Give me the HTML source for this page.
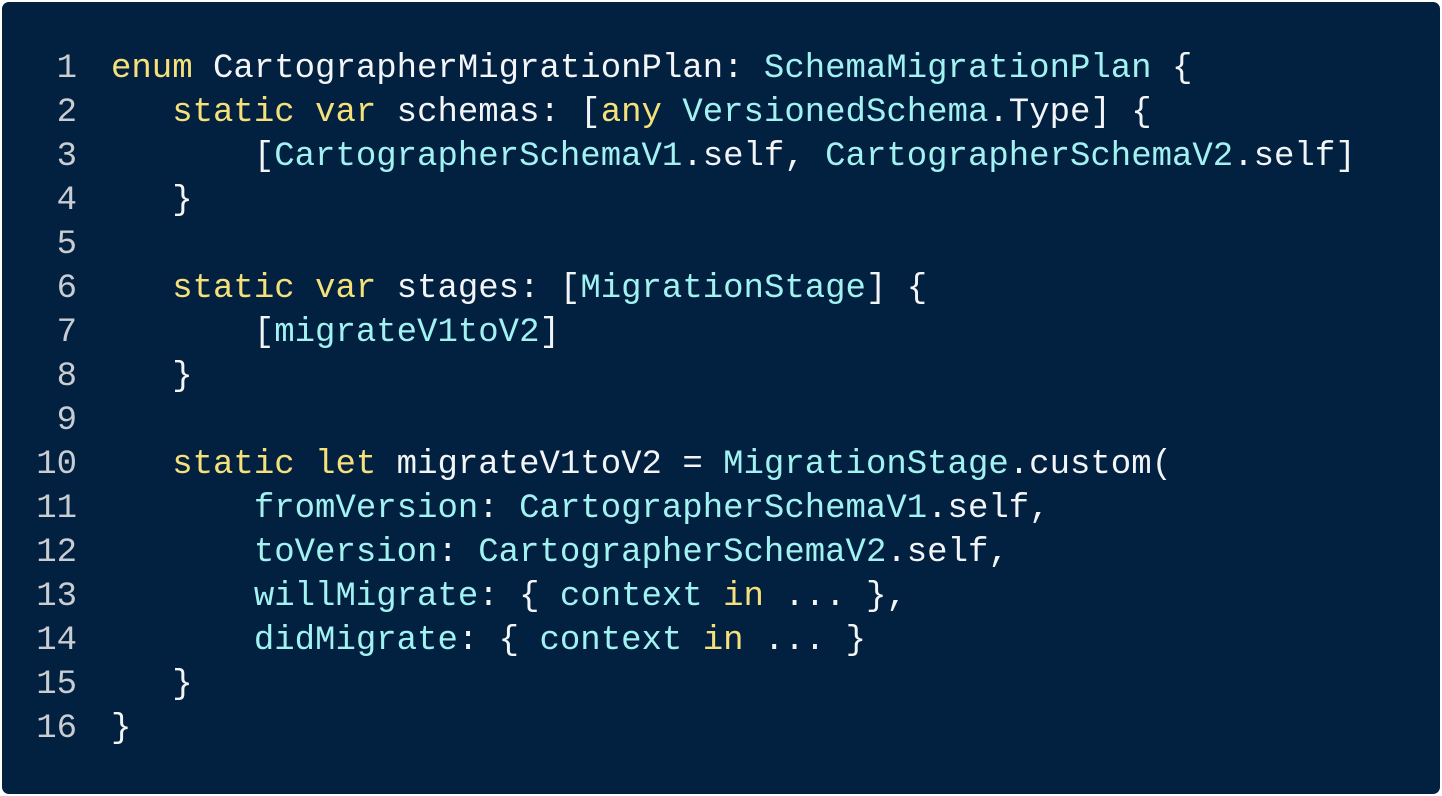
<!DOCTYPE html>
<html><head><meta charset="utf-8"><style>
html,body{margin:0;padding:0;background:#fff;width:1442px;height:796px;overflow:hidden}
.card{position:absolute;left:2px;top:2px;width:1438px;height:792px;background:#022141;border-radius:7px}
pre{position:absolute;left:1px;top:47px;margin:0;font-family:"Liberation Mono",monospace;font-size:34px;line-height:44px;color:#f2f4f6}
.n{display:inline-block;width:76px;text-align:right;color:#c9cdd2;margin-right:34px}
.k{color:#f5e07a}.t{color:#a2f2f2}
</style></head><body><div class="card"></div>
<pre><span class="n">1</span><span class="k">enum</span> CartographerMigrationPlan: <span class="t">SchemaMigrationPlan</span> {
<span class="n">2</span>   <span class="k">static</span> <span class="k">var</span> schemas: [<span class="k">any</span> <span class="t">VersionedSchema</span>.Type] {
<span class="n">3</span>       [<span class="t">CartographerSchemaV1</span>.self, <span class="t">CartographerSchemaV2</span>.self]
<span class="n">4</span>   }
<span class="n">5</span>
<span class="n">6</span>   <span class="k">static</span> <span class="k">var</span> stages: [<span class="t">MigrationStage</span>] {
<span class="n">7</span>       [<span class="t">migrateV1toV2</span>]
<span class="n">8</span>   }
<span class="n">9</span>
<span class="n">10</span>   <span class="k">static</span> <span class="k">let</span> migrateV1toV2 = <span class="t">MigrationStage</span>.custom(
<span class="n">11</span>       <span class="t">fromVersion</span>: <span class="t">CartographerSchemaV1</span>.self,
<span class="n">12</span>       <span class="t">toVersion</span>: <span class="t">CartographerSchemaV2</span>.self,
<span class="n">13</span>       <span class="t">willMigrate</span>: { <span class="t">context</span> <span class="k">in</span> ... },
<span class="n">14</span>       <span class="t">didMigrate</span>: { <span class="t">context</span> <span class="k">in</span> ... }
<span class="n">15</span>   }
<span class="n">16</span>}
</pre>
</body></html>
